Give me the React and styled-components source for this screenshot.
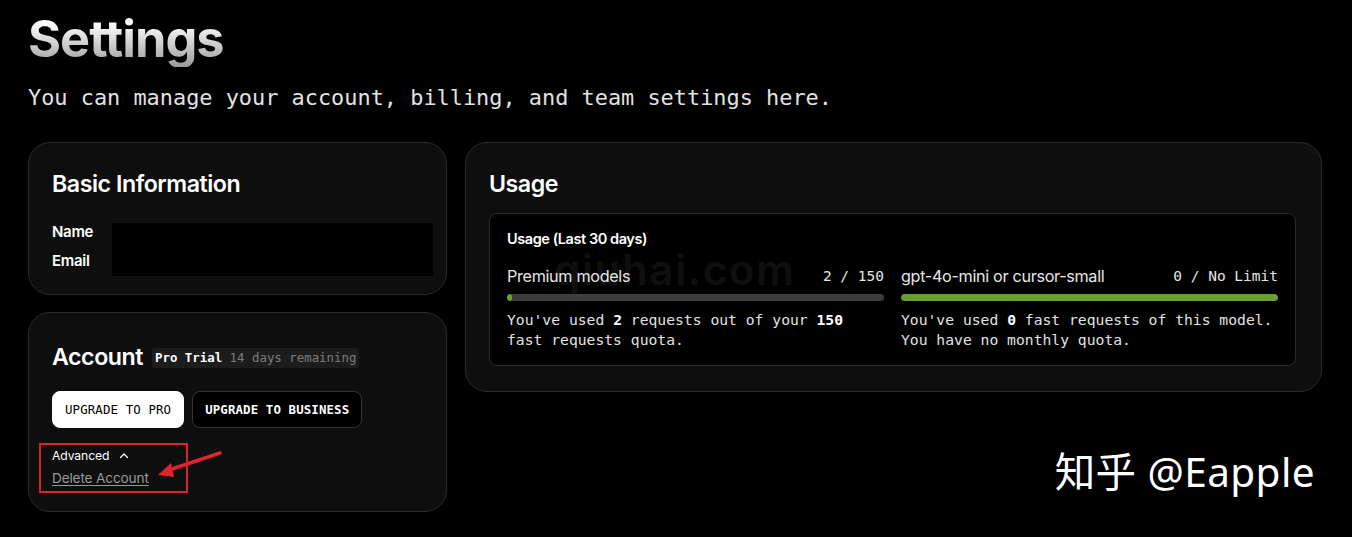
import styled, { createGlobalStyle } from "styled-components"

const Global = createGlobalStyle`
html, body {
  margin: 0;
  background: #000;
}
body {
  font-family: Inter, "Noto Sans", sans-serif;
  color: #fff;
}
`

const Page = styled.div`
position: relative;
min-height: 537px;
padding: 11px 30px 0 28px;
box-sizing: border-box;
`

const Title = styled.h1`
margin: 0;
font-size: 50.5px;
line-height: 56px;
font-weight: 700;
letter-spacing: -0.02em;
background: linear-gradient(180deg, #ffffff 20%, #9a9a9a 100%);
-webkit-background-clip: text;
background-clip: text;
color: transparent;
display: inline-block;
`

const Subtitle = styled.p`
margin: 17px 0 30px;
font-family: "DejaVu Sans Mono", "Liberation Mono", monospace;
font-size: 21.9px;
line-height: 28px;
color: #e2e2e2;
`

const Grid = styled.div`
display: grid;
grid-template-columns: 419px 1fr;
gap: 18px;
align-items: start;
`

const Column = styled.div`
display: flex;
flex-direction: column;
gap: 17px;
`

const Card = styled.section`
background: #0e0e0e;
border: 1px solid #2a2a2a;
border-radius: 22px;
padding: ${(p) => p.$pad || "27px 23px 24px"};
box-sizing: border-box;
`

const Heading = styled.h2`
margin: 0;
font-size: 23.2px;
line-height: 28px;
font-weight: 600;
letter-spacing: -0.02em;
color: #fff;
`

const InfoRow = styled.div`
display: flex;
margin-top: 24px;
margin-right: -10px;
gap: 19px;
`

const Labels = styled.div`
display: flex;
flex-direction: column;
gap: 9px;
font-size: 15px;
line-height: 20px;
font-weight: 600;
letter-spacing: -0.02em;
`

const Redacted = styled.div`
flex: 1;
height: 53px;
background: #000;
margin-top: 1px;
`

const HeadRow = styled.div`
display: flex;
align-items: center;
gap: 9px;
`

const Badge = styled.span`
background: #1c1c1c;
border-radius: 3px;
padding: 2px 3px;
margin-top: 1px;
font-family: "DejaVu Sans Mono", "Liberation Mono", monospace;
font-size: 12.4px;
line-height: 16px;
color: #7c7c7c;
b {
  color: #fff;
  font-weight: 700;
}
`

const Buttons = styled.div`
display: flex;
gap: 8px;
margin-top: 20px;
`

const Button = styled.button`
height: 37px;
padding: 0 12px;
border-radius: 8px;
border: 1px solid ${(p) => (p.$primary ? "#fff" : "#333")};
background: ${(p) => (p.$primary ? "#fff" : "#000")};
color: ${(p) => (p.$primary ? "#000" : "#fff")};
font-family: "DejaVu Sans Mono", "Liberation Mono", monospace;
font-size: 12.4px;
font-weight: ${(p) => (p.$primary ? 400 : 700)};
letter-spacing: 0.01em;
`

const Advanced = styled.div`
position: relative;
margin-top: 20px;
display: flex;
flex-direction: column;
align-items: flex-start;
gap: 6px;
`

const Toggle = styled.div`
display: flex;
align-items: center;
gap: 9px;
font-size: 12.2px;
line-height: 16px;
letter-spacing: -0.01em;
`

const DeleteLink = styled.a`
font-size: 13.6px;
line-height: 16px;
color: #9a9a9a;
text-decoration: underline;
text-decoration-color: #9a9a9a;
text-underline-offset: 2px;
letter-spacing: -0.01em;
cursor: pointer;
`

const Highlight = styled.div`
position: absolute;
left: -13px;
top: -5px;
width: 149px;
height: 50px;
border: 2px solid #d8232c;
box-sizing: border-box;
pointer-events: none;
`

const Arrow = styled.svg`
position: absolute;
left: 102px;
top: 3px;
overflow: visible;
`

const Panel = styled.div`
margin-top: 15px;
background: #000;
border: 1px solid #2a2a2a;
border-radius: 8px;
padding: 15px 17px 15px;
`

const PanelTitle = styled.div`
font-size: 14.5px;
line-height: 20px;
font-weight: 600;
letter-spacing: -0.03em;
`

const Models = styled.div`
display: grid;
grid-template-columns: 1fr 1fr;
gap: 17px;
margin-top: 17px;
`

const Model = styled.div`
display: flex;
flex-direction: column;
`

const ModelHead = styled.div`
display: flex;
justify-content: space-between;
align-items: center;
font-size: 16.2px;
line-height: 20px;
color: #e6e6e6;
letter-spacing: -0.02em;
`

const Count = styled.span`
font-family: "DejaVu Sans Mono", "Liberation Mono", monospace;
font-size: 14.5px;
letter-spacing: 0;
color: #e6e6e6;
`

const Track = styled.div`
margin-top: 8px;
height: 7px;
border-radius: 4px;
background: #3c3c3c;
overflow: hidden;
`

const Fill = styled.div`
height: 100%;
border-radius: 4px;
background: #6a9f2d;
`

const Note = styled.p`
margin: 9px 0 0;
font-family: "DejaVu Sans Mono", "Liberation Mono", monospace;
font-size: 14.7px;
line-height: 20px;
color: #e2e2e2;
b {
  color: #fff;
}
`

const UsageCard = styled(Card)`
position: relative;
`

const SiteMark = styled.div`
position: absolute;
left: 88px;
top: 101px;
font-size: 42px;
font-weight: 600;
letter-spacing: 0.04em;
color: #fff;
opacity: 0.06;
pointer-events: none;
`

const Watermark = styled.div`
position: absolute;
right: 37px;
top: 446px;
font-family: "Noto Sans", "Noto Sans CJK SC", sans-serif;
font-size: 40.5px;
line-height: 52px;
color: #fff;
letter-spacing: 0.01em;
`

const ChevronUp = () => (
  <svg width="12" height="12" viewBox="0 0 24 24" fill="none" stroke="#fff" strokeWidth="2.6" strokeLinecap="round" strokeLinejoin="round">
    <path d="M5 15l7-7 7 7" />
  </svg>
)

const models = [
  {
    name: "Premium models",
    count: "2 / 150",
    pct: 1.4,
    note: (
      <>
        You've used <b>2</b> requests out of your <b>150</b> fast requests quota.
      </>
    ),
  },
  {
    name: "gpt-4o-mini or cursor-small",
    count: "0 / No Limit",
    pct: 100,
    note: (
      <>
        You've used <b>0</b> fast requests of this model. You have no monthly quota.
      </>
    ),
  },
]

export default function App() {
  return (
    <Page>
      <Global />
      <Title>Settings</Title>
      <Subtitle>You can manage your account, billing, and team settings here.</Subtitle>
      <Grid>
        <Column>
          <Card $pad="27px 23px 18px">
            <Heading>Basic Information</Heading>
            <InfoRow>
              <Labels>
                <span>Name</span>
                <span>Email</span>
              </Labels>
              <Redacted />
            </InfoRow>
          </Card>
          <Card $pad="30px 23px 25px">
            <HeadRow>
              <Heading>Account</Heading>
              <Badge>
                <b>Pro Trial</b> 14 days remaining
              </Badge>
            </HeadRow>
            <Buttons>
              <Button $primary>UPGRADE TO PRO</Button>
              <Button>UPGRADE TO BUSINESS</Button>
            </Buttons>
            <Advanced>
              <Toggle>
                Advanced <ChevronUp />
              </Toggle>
              <DeleteLink>Delete Account</DeleteLink>
              <Highlight />
              <Arrow width="70" height="30">
                <path d="M66 2 L12 20" stroke="#e0232c" strokeWidth="3.5" strokeLinecap="round" />
                <path d="M4 24 L17 12 L20 26 Z" fill="#e0232c" />
              </Arrow>
            </Advanced>
          </Card>
        </Column>
        <UsageCard $pad="27px 25px 25px 23px">
          <Heading>Usage</Heading>
          <Panel>
            <PanelTitle>Usage (Last 30 days)</PanelTitle>
            <Models>
              {models.map((m) => (
                <Model key={m.name}>
                  <ModelHead>
                    <span>{m.name}</span>
                    <Count>{m.count}</Count>
                  </ModelHead>
                  <Track>
                    <Fill style={{ width: `${m.pct}%` }} />
                  </Track>
                  <Note>{m.note}</Note>
                </Model>
              ))}
            </Models>
          </Panel>
          <SiteMark>qiuhai.com</SiteMark>
        </UsageCard>
      </Grid>
      <Watermark>知乎 @Eapple</Watermark>
    </Page>
  )
}
